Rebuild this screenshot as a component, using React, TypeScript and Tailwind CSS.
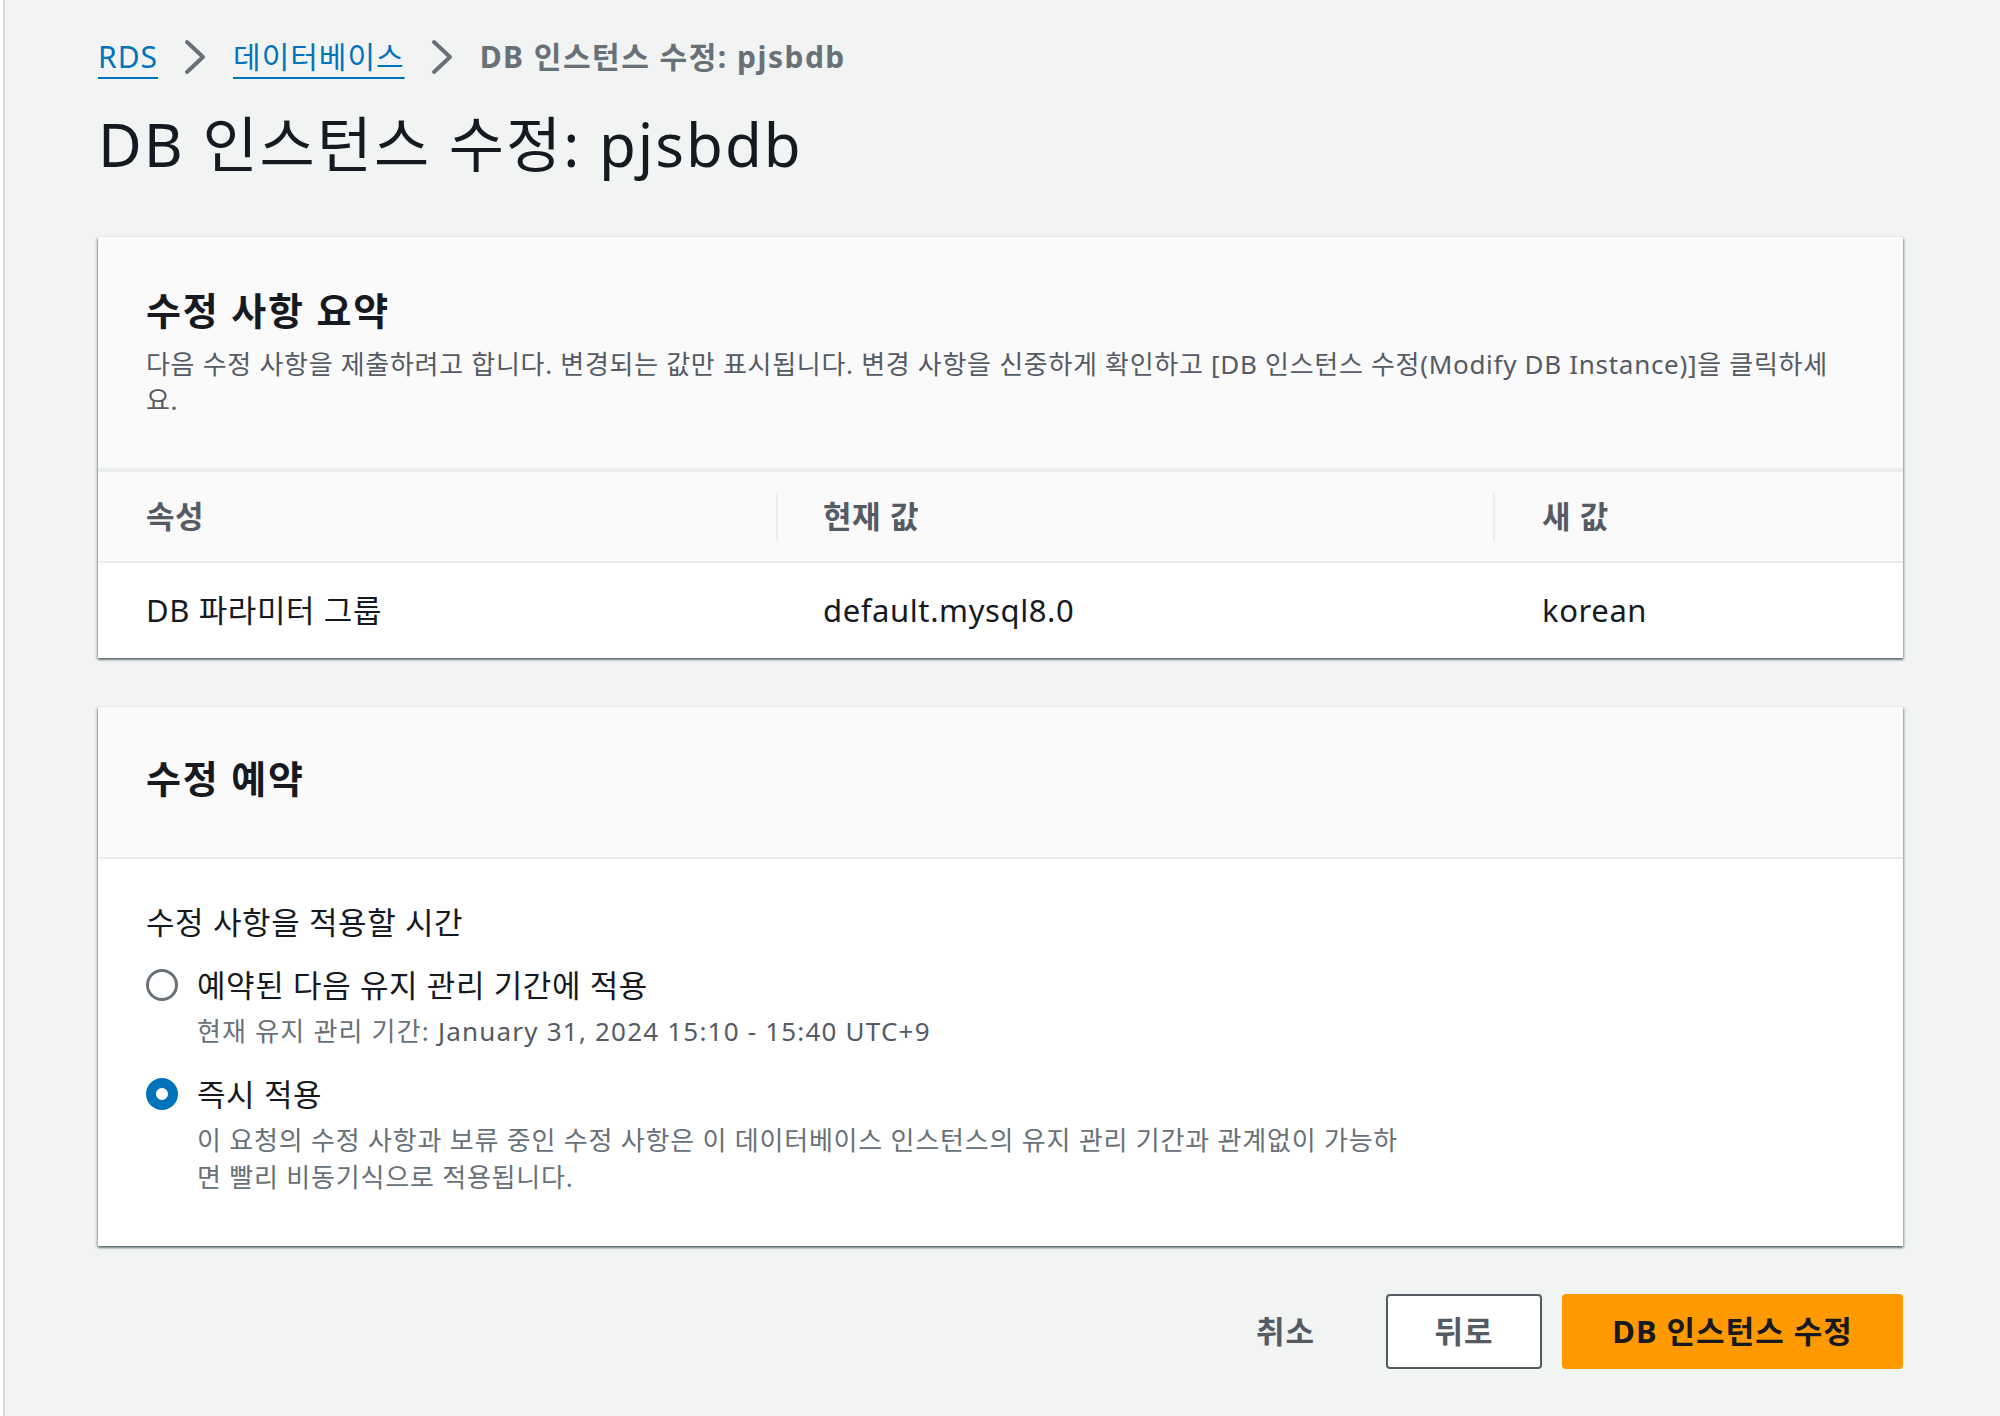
const FONT = "font-['Noto_Sans','Noto_Sans_CJK_KR',sans-serif]";

function Chevron() {
  return (
    <svg width="22" height="36" viewBox="0 0 22 36" className="ml-[26px] mr-[27px] shrink-0" aria-hidden>
      <polyline points="3,3 19,18 3,33" fill="none" stroke="#687078" strokeWidth="4" strokeLinecap="round" strokeLinejoin="round" />
    </svg>
  );
}

const panelShadow =
  'shadow-[0_2px_2px_0_rgba(0,28,36,0.5),2px_1px_2px_0_rgba(0,28,36,0.15),-2px_1px_2px_0_rgba(0,28,36,0.15),0_0_1px_0_rgba(0,28,36,0.15)]';

function Radio({ checked }: { checked?: boolean }) {
  return checked ? (
    <span className="w-[32px] h-[32px] rounded-full border-[10px] border-[#0073bb] bg-white shrink-0" />
  ) : (
    <span className="w-[32px] h-[32px] rounded-full border-[3px] border-[#687078] bg-white shrink-0" />
  );
}

export default function App() {
  return (
    <div className={`${FONT} min-h-screen bg-[#f2f3f3] ml-[3px] border-l-2 border-[#d5dbdb] text-[#16191f]`}>
      <div className="pl-[93px] pr-[97px] pt-[37px] pb-[40px]">
        {/* breadcrumb */}
        <nav className="flex items-center text-[30px] leading-[40px] tracking-[1px]">
          <a className="text-[#0073bb] underline decoration-2 underline-offset-[9px]">RDS</a>
          <Chevron />
          <a className="text-[#0073bb] underline decoration-2 underline-offset-[9px]">데이터베이스</a>
          <Chevron />
          <span className="font-bold tracking-[1.5px] text-[#687078]">DB 인스턴스 수정: pjsbdb</span>
        </nav>

        <h1 className="mt-[32px] text-[60px] leading-[70px] tracking-[2px] font-normal">DB 인스턴스 수정: pjsbdb</h1>

        {/* summary panel */}
        <section className={`mt-[58px] bg-white ${panelShadow}`}>
          <div className="bg-[#fafafa] px-[48px] pt-[49px] pb-[50px]">
            <h2 className="text-[38px] leading-[48px] tracking-[1.8px] font-bold">수정 사항 요약</h2>
            <p className="mt-[12px] text-[26px] leading-[36px] tracking-[0.7px] text-[#545b64]">
              다음 수정 사항을 제출하려고 합니다. 변경되는 값만 표시됩니다. 변경 사항을 신중하게 확인하고 [DB 인스턴스 수정(Modify DB Instance)]을 클릭하세
              <br />
              요.
            </p>
          </div>
          <div className="grid grid-cols-[678px_717px_1fr] h-[95px] bg-[#fafafa] border-t-4 border-b-2 border-[#eaeded] text-[31px] tracking-[0.6px] font-bold text-[#545b64]">
            <div className="flex items-center pl-[48px]">속성</div>
            <div className="flex items-center">
              <span className="w-[2px] h-[48px] bg-[#eaeded]" />
              <span className="pl-[45px]">현재 값</span>
            </div>
            <div className="flex items-center">
              <span className="w-[2px] h-[48px] bg-[#eaeded]" />
              <span className="pl-[47px]">새 값</span>
            </div>
          </div>
          <div className="grid grid-cols-[678px_717px_1fr] h-[95px] text-[31px] tracking-[0.6px]">
            <div className="flex items-center pl-[48px]">DB 파라미터 그룹</div>
            <div className="flex items-center pl-[47px]">default.mysql8.0</div>
            <div className="flex items-center pl-[49px]">korean</div>
          </div>
        </section>

        {/* schedule panel */}
        <section className={`mt-[49px] bg-white ${panelShadow}`}>
          <div className="bg-[#fafafa] px-[48px] pt-[47px] pb-[55px] border-b-2 border-[#eaeded]">
            <h2 className="text-[38px] leading-[48px] tracking-[1.8px] font-bold">수정 예약</h2>
          </div>
          <div className="px-[48px] pt-[41px] pb-[50px]">
            <div className="text-[31px] leading-[44px] tracking-[0.6px]">수정 사항을 적용할 시간</div>

            <div className="mt-[19px]">
              <label className="flex items-center gap-[19px] text-[31px] leading-[44px] tracking-[0.6px]">
                <Radio />
                <span>예약된 다음 유지 관리 기간에 적용</span>
              </label>
              <p className="mt-[6px] pl-[51px] text-[26px] leading-[37px] tracking-[1.2px] text-[#687078]">
                현재 유지 관리 기간: <span className="text-[#545b64]">January 31, 2024 15:10 - 15:40 UTC+9</span>
              </p>
            </div>

            <div className="mt-[22px]">
              <label className="flex items-center gap-[19px] text-[31px] leading-[44px] tracking-[0.6px]">
                <Radio checked />
                <span>즉시 적용</span>
              </label>
              <p className="mt-[6px] pl-[51px] text-[26px] leading-[37px] tracking-[0.8px] text-[#687078]">
                이 요청의 수정 사항과 보류 중인 수정 사항은 이 데이터베이스 인스턴스의 유지 관리 기간과 관계없이 가능하
                <br />
                면 빨리 비동기식으로 적용됩니다.
              </p>
            </div>
          </div>
        </section>

        {/* actions */}
        <div className="mt-[48px] flex items-center justify-end text-[31px] tracking-[1px] font-bold">
          <button className="mr-[71px] text-[#545b64]">취소</button>
          <button className="w-[156px] h-[75px] rounded-[4px] border-2 border-[#545b64] bg-white text-[#545b64]">뒤로</button>
          <button className="ml-[20px] w-[341px] h-[75px] rounded-[4px] bg-[#ff9900] text-[#16191f]">DB 인스턴스 수정</button>
        </div>
      </div>
    </div>
  );
}
